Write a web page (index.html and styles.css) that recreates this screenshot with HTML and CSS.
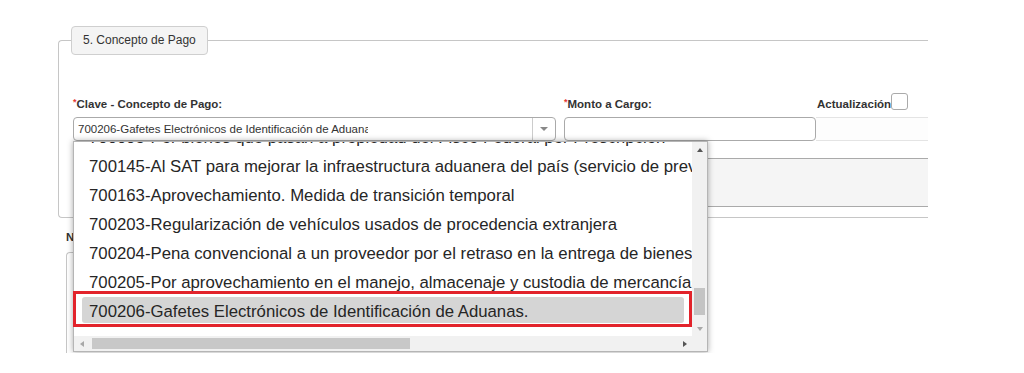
FILE: index.html
```html
<!DOCTYPE html>
<html lang="es">
<head>
  <meta charset="UTF-8">
  <title>Concepto de Pago</title>
  <link rel="stylesheet" href="styles.css">
</head>
<body>

  <fieldset class="seccion">
    <legend>5. Concepto de Pago</legend>

    <div class="fila">
      <div class="campo campo-clave">
        <div class="etiqueta"><span class="req">*</span>Clave - Concepto de Pago:</div>
        <div class="combo">
          <span class="combo-valor">700206-Gafetes Electrónicos de Identificación de Aduanas.</span>
          <span class="combo-flecha"><i class="tri tri-abajo"></i></span>
        </div>

        <div class="lista">
          <div class="lista-area">
            <ul class="opciones">
              <li>700095-Por bienes que pasan a propiedad del Fisco Federal por Prescripción</li>
              <li>700145-Al SAT para mejorar la infraestructura aduanera del país (servicio de prevención y control)</li>
              <li>700163-Aprovechamiento. Medida de transición temporal</li>
              <li>700203-Regularización de vehículos usados de procedencia extranjera</li>
              <li>700204-Pena convencional a un proveedor por el retraso en la entrega de bienes o servicios</li>
              <li>700205-Por aprovechamiento en el manejo, almacenaje y custodia de mercancías</li>
              <li class="sel">700206-Gafetes Electrónicos de Identificación de Aduanas.</li>
            </ul>
          </div>
          <div class="barra-v">
            <span class="btn"><i class="tri tri-arriba"></i></span>
            <span class="pista"><span class="pulgar"></span></span>
            <span class="btn"><i class="tri tri-abajo claro"></i></span>
          </div>
          <div class="barra-h">
            <span class="btn"><i class="tri tri-izq claro"></i></span>
            <span class="pista"><span class="pulgar"></span></span>
            <span class="btn"><i class="tri tri-der"></i></span>
          </div>
          <div class="esquina"></div>
          <div class="marca"></div>
        </div>
      </div>

      <div class="campo campo-monto">
        <div class="etiqueta"><span class="req">*</span>Monto a Cargo:</div>
        <input type="text" class="caja">
      </div>

      <div class="campo campo-act">
        <div class="etiqueta etiqueta-act"><span>Actualización</span><span class="check"></span></div>
        <input type="text" class="caja caja-clara">
      </div>
    </div>

    <div class="descripcion"></div>
  </fieldset>

  <div class="seccion2">
    <div class="etiqueta2">Número de Operación:</div>
    <div class="panel"></div>
  </div>

</body>
</html>
```

FILE: styles.css
```css
body {
  margin: 0;
  font-family: "Liberation Sans", Arial, sans-serif;
  color: #333;
  background-color: #fff;
}
.seccion {
  margin: 26px 0 0 58px;
  width: 870px;
  min-width: 0;
  box-sizing: border-box;
  padding: 36px 0 10px 14px;
  border: 1px solid #c6c6c6;
  border-right: none;
  border-radius: 4px 0 0 4px;
}
legend {
  margin-left: -2px;
  padding: 6px 11px;
  font-size: 12px;
  line-height: 15px;
  color: #333;
  background-color: #f4f4f4;
  border: 1px solid #cfcfcf;
  border-radius: 4px;
}
.fila {
  display: flex;
}
.campo-clave {
  position: relative;
  width: 483px;
  margin-right: 8px;
}
.campo-monto {
  width: 252px;
}
.campo-act {
  flex: 1;
}
.etiqueta {
  height: 14px;
  padding-top: 6px;
  margin-bottom: 6px;
  font-size: 11.5px;
  font-weight: bold;
  line-height: 14px;
  white-space: nowrap;
}
.etiqueta-act {
  display: flex;
  align-items: flex-end;
  padding-left: 1px;
}
.req {
  color: #e53935;
  font-size: 9px;
  line-height: 10px;
  vertical-align: top;
}
.check {
  display: block;
  width: 17px;
  height: 17px;
  box-sizing: border-box;
  margin-bottom: 1px;
  border: 1px solid #aaa;
  border-radius: 3px;
  background-color: #fff;
}
.combo {
  display: flex;
  align-items: center;
  height: 24px;
  box-sizing: border-box;
  border: 1px solid #aaa;
  border-radius: 4px;
  background-color: #fff;
}
.combo-valor {
  width: 290px;
  padding-left: 4px;
  overflow: hidden;
  white-space: nowrap;
  font-size: 11.5px;
}
.combo-flecha {
  margin-left: auto;
  width: 22px;
  align-self: stretch;
  display: flex;
  align-items: center;
  justify-content: center;
  border-left: 1px solid #ccc;
}
.caja {
  display: block;
  width: 100%;
  height: 24px;
  box-sizing: border-box;
  margin: 0;
  padding: 0;
  border: 1px solid #aaa;
  border-radius: 4px;
  background-color: #fff;
}
.caja-clara {
  border-color: #e4e4e4;
  border-left: none;
  border-right: none;
  border-radius: 0;
  background-color: #fdfdfd;
}
.descripcion {
  margin-top: 17px;
  height: 49px;
  box-sizing: border-box;
  background-color: #f5f5f5;
  border-top: 1px solid #aaa;
  border-bottom: 1px solid #aaa;
}
.seccion2 {
  margin: 12px 0 0 66px;
}
.etiqueta2 {
  font-size: 11.5px;
  font-weight: bold;
  line-height: 14px;
}
.panel {
  margin-top: 8px;
  width: 560px;
  height: 100px;
  border: 1px solid #c6c6c6;
  border-right: none;
  border-bottom: none;
  border-radius: 4px 0 0 0;
}

/* lista desplegable */
.lista {
  position: absolute;
  top: 100%;
  left: 0;
  z-index: 5;
  width: 635px;
  height: 211px;
  box-sizing: border-box;
  display: grid;
  grid-template-columns: 1fr 15px;
  grid-template-rows: 1fr 15px;
  border: 1px solid #b5b5b5;
  background-color: #fff;
  box-shadow: 0 0 6px rgba(0, 0, 0, 0.35);
}
.lista-area {
  overflow: hidden;
  padding: 0 8px;
}
.opciones {
  list-style: none;
  margin: -19px 0 0;
  padding: 0;
}
.opciones li {
  height: 26px;
  margin-bottom: 3px;
  padding: 0 7px;
  font-size: 16.75px;
  line-height: 30px;
  color: #262626;
  white-space: nowrap;
  border-radius: 3px;
}
.opciones li.sel {
  background-color: #d5d5d5;
}
.marca {
  position: absolute;
  left: -1px;
  top: 149px;
  width: 619px;
  height: 36px;
  box-sizing: border-box;
  border: 3px solid #e2232b;
}
.barra-v,
.barra-h,
.esquina {
  background-color: #f1f1f1;
}
.barra-v {
  display: flex;
  flex-direction: column;
}
.barra-h {
  display: flex;
}
.btn {
  flex: 0 0 15px;
  display: flex;
  align-items: center;
  justify-content: center;
}
.pista {
  flex: 1;
  display: flex;
}
.barra-v .pista {
  flex-direction: column;
}
.barra-v .pulgar {
  height: 27px;
  margin: 131px 2px 0;
  background-color: #c4c4c4;
}
.barra-h .pulgar {
  width: 318px;
  margin: 2px 0 2px 3px;
  background-color: #c8c8c8;
}
.tri {
  width: 0;
  height: 0;
  border: 0 solid transparent;
}
.tri-abajo {
  border-width: 4px 4px 0;
  border-top-color: #888;
}
.tri-arriba {
  border-width: 0 3.5px 4px;
  border-bottom-color: #555;
}
.barra-v .tri-abajo {
  border-width: 4px 3.5px 0;
}
.tri-izq {
  border-width: 3.5px 4px 3.5px 0;
  border-right-color: #555;
}
.tri-der {
  border-width: 3.5px 0 3.5px 4px;
  border-left-color: #555;
}
.tri-abajo.claro {
  border-top-color: #a8a8a8;
}
.tri-izq.claro {
  border-right-color: #a8a8a8;
}
```
